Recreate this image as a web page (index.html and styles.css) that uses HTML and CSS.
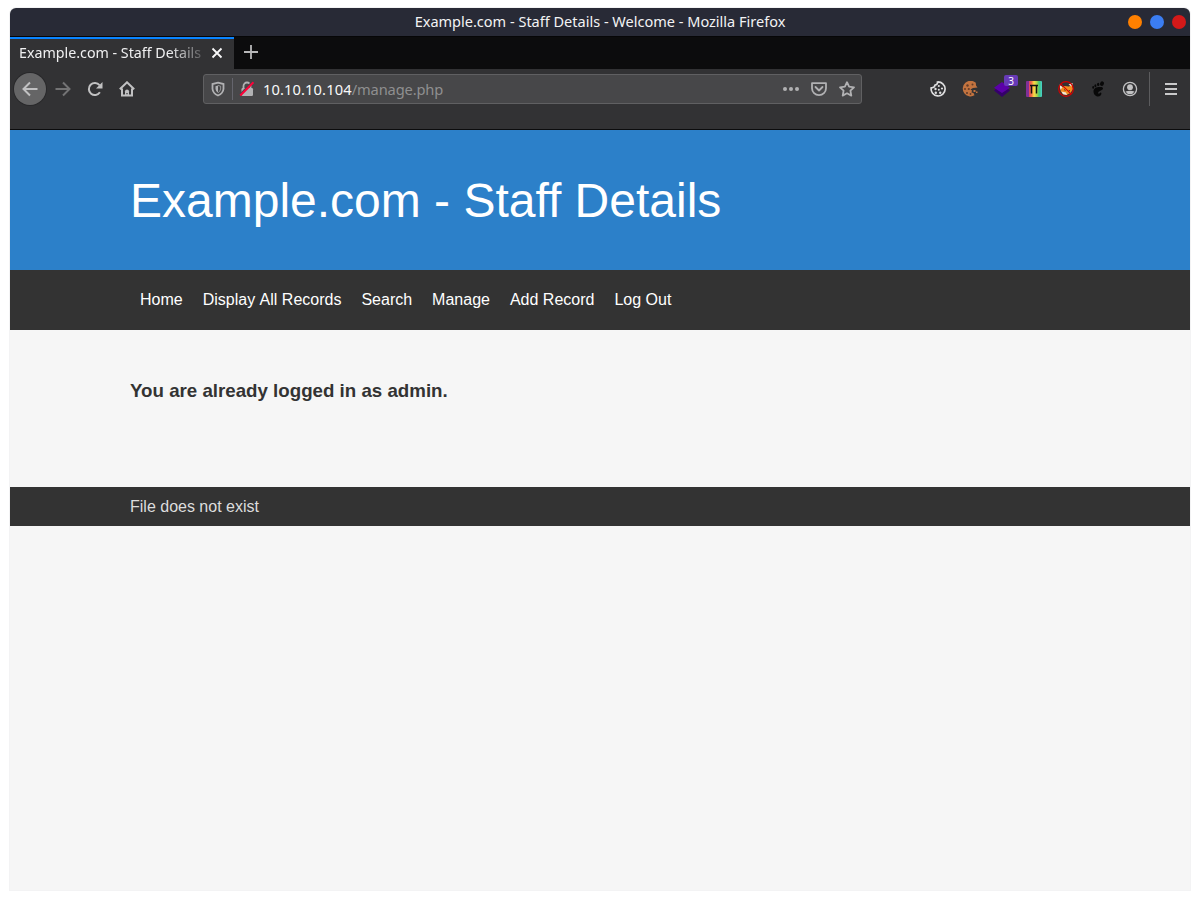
FILE: index.html
```html
<!DOCTYPE html>
<html lang="en">
<head>
<meta charset="utf-8">
<title>Example.com - Staff Details - Welcome</title>
<link rel="stylesheet" href="styles.css">
</head>
<body>
<div class="window">
  <div class="titlebar">
    <span class="titlebar-text">Example.com - Staff Details - Welcome - Mozilla Firefox</span>
    <div class="controls"><i class="dot orange"></i><i class="dot blue"></i><i class="dot red"></i></div>
  </div>
  <div class="tabs">
    <div class="tab">
      <span class="tab-label">Example.com - Staff Details</span>
      <svg class="tab-close" width="12" height="12" viewBox="0 0 12 12"><path d="M1.500 1.500l9 9M10.500 1.500l-9 9" stroke="#f9f9fa" stroke-width="1.800"/></svg>
    </div>
    <svg class="tab-new" width="16" height="16" viewBox="0 0 16 16"><path d="M8 1v14M1 8h14" stroke="#b8b8b9" stroke-width="1.800"/></svg>
  </div>
  <div class="toolbar">
    <div class="btn back"><svg width="16" height="16" viewBox="0 0 16 16"><path d="M15.500 8H1.500M8 1.500L1.500 8 8 14.500" class="line"/></svg></div>
    <div class="btn forward"><svg width="16" height="16" viewBox="0 0 16 16"><path d="M0.500 8h14M8 1.500L14.500 8 8 14.500" class="line"/></svg></div>
    <div class="btn"><svg width="16" height="16" viewBox="0 0 16 16"><path d="M12.900 11.300A6 6 0 1 1 12.500 4.200" class="line"/><path d="M15.500 1v6.500H9z" fill="#c1c1c2"/></svg></div>
    <div class="btn"><svg width="16" height="16" viewBox="0 0 16 16"><path d="M0.800 8.300L8 1.300l7.200 7M3 7.500V14.500H13V7.500" class="line"/><path d="M6 15V10.200Q6 8.500 8 8.500T10 10.200V15z" fill="#c1c1c2"/><path d="M8 12v1.200" stroke="#323234" stroke-width="1.200"/></svg></div>
    <div class="urlbar">
      <svg class="shield" width="14" height="16" viewBox="0 0 14 16"><path d="M7 1.700L12.500 3V8Q12 12.500 7 14.500 2 12.500 1.500 8V3z" class="line"/><path d="M7 4.600L4.500 5.200V8Q4.800 10.500 7 11.800z" fill="#b1b1b3"/><path d="M7 4.500L9.600 5.200V8Q9.300 10.500 7 11.800" stroke="#b1b1b3" fill="none" stroke-width=".7"/></svg>
      <span class="url-divider"></span>
      <svg class="lock" width="16" height="16" viewBox="0 0 16 16"><path d="M4.500 8V5a3.500 3.500 0 0 1 7 0V8" class="line"/><rect x="2.500" y="7" width="11.500" height="8" rx="1.200" fill="#b1b1b3"/><path d="M2 13L13.500 1" stroke="#464648" stroke-width="2.500"/><path d="M1.300 14.500L14.500 1.200" stroke="#ff0039" stroke-width="2"/></svg>
      <span class="address"><span class="host">10.10.10.104</span><span class="path">/manage.php</span></span>
      <div class="url-actions">
        <svg width="16" height="16" viewBox="0 0 16 16"><g fill="#b1b1b3"><circle cx="2" cy="8" r="2"/><circle cx="8" cy="8" r="2"/><circle cx="14" cy="8" r="2"/></g></svg>
        <svg width="16" height="16" viewBox="0 0 16 16"><path d="M1 2.200H15V7.200a7 7 0 0 1-14 0zM4.500 6L8 9.500 11.500 6" class="line" stroke-linejoin="round" stroke-linecap="round"/></svg>
        <svg width="16" height="16" viewBox="0 0 16 16"><path d="M8 1.200l2.100 4.400 4.900.7-3.600 3.400.9 4.900L8 12.300l-4.300 2.300.9-4.900L1 6.300l4.900-.7z" class="line" stroke-linejoin="round"/></svg>
      </div>
    </div>
    <div class="extensions">
      <div class="btn"><svg width="16" height="16" viewBox="0 0 16 16"><path d="M7.500 1Q7.800 3.800 5 4.200 4.500 7 1.200 6.800A7 7 0 1 0 7.500 1z" stroke="#dededf" stroke-width="1.700" fill="none"/><g fill="#dededf"><circle cx="8.800" cy="5" r="1.100"/><circle cx="12" cy="7.500" r="1.100"/><circle cx="5.500" cy="8" r="1.200"/><circle cx="8.800" cy="8.800" r="1"/><circle cx="5.800" cy="11.800" r="1.200"/><circle cx="10.200" cy="11.800" r="1.200"/></g></svg></div>
      <div class="btn"><svg width="16" height="16" viewBox="0 0 16 16"><path d="M13.800 1.800A7.800 7.800 0 1 0 12.500 14.300L11.500 12 9.500 11.500 10 9.500 8.500 8.500 11 7 15.500 6.500 14 4.500z" fill="#c2733f"/><g fill="#633c29"><circle cx="5.500" cy="4.500" r="1.200"/><circle cx="10.500" cy="3.500" r="1"/><circle cx="3" cy="8" r="1"/><circle cx="6.800" cy="8" r="1.100"/><circle cx="5" cy="12" r="1.100"/><circle cx="8.500" cy="13" r=".9"/></g><path d="M11.500 9h2v2h-2zM14 10.500h1.500V12H14z" fill="#c2733f"/></svg></div>
      <div class="btn badge-host"><svg width="16" height="16" viewBox="0 0 16 16"><path d="M0 9.500L8 4l8 5.500L8 16z" fill="#35006b"/><path d="M0 6.700L8 1l8 5.700L8 12z" fill="#5b00a8"/></svg><span class="badge">3</span></div>
      <div class="btn"><svg width="16" height="16" viewBox="0 0 16 16"><defs><linearGradient id="rainbow"><stop stop-color="#803097"/><stop offset=".16" stop-color="#803097"/><stop offset=".2" stop-color="#e34460"/><stop offset=".35" stop-color="#f27745"/><stop offset=".5" stop-color="#fcda45"/><stop offset=".68" stop-color="#afd34b"/><stop offset=".82" stop-color="#42c776"/><stop offset="1" stop-color="#48cfd0"/></linearGradient></defs><rect width="16" height="16" rx="1" fill="url(#rainbow)"/><path d="M4 4.500H12M5.500 12.500V4.500M10.500 4.500V12.500" stroke="#111" stroke-width="1.500" fill="none"/></svg></div>
      <div class="btn"><svg width="16" height="16" viewBox="0 0 16 16"><path d="M3 6.500L6.500 5 11 5.500 14.500 3.500 15 8 12.500 12 8.500 14 5 13 2.500 10z" fill="#f28b20"/><path d="M1.200 3.500L4.500 6 2.500 9zM10.500 3.500L14.800 2 13.500 5.500zM3.500 10.500L8 11.500 9 14 5 13.200z" fill="#f5ead9"/><path d="M6 8.500l1.500 1M10.500 10l1.500-.5" stroke="#54301c"/><circle cx="8" cy="8" r="7.300" stroke="#d40000" stroke-width="1.200" fill="none"/><path d="M2.800 2.800l10.400 10.400" stroke="#d40000" stroke-width="1.100"/></svg></div>
      <div class="btn"><svg width="16" height="16" viewBox="0 0 16 16"><g fill="#080808"><ellipse cx="12" cy="2.600" rx="1.900" ry="2.300" transform="rotate(20 12 2.600)"/><ellipse cx="8.200" cy="3.400" rx="1.200" ry="1.700"/><ellipse cx="5.400" cy="4.700" rx="1" ry="1.500"/><ellipse cx="3.200" cy="6.400" rx=".9" ry="1.300"/><path d="M11.500 6C7 5.500 3.500 7 3.500 10.200 3.500 13 5.500 15.500 8 15.500c2.200 0 3.500-1.400 3.400-3.300-.1-.9-1.200-1-1.600-.2-.4 1-1.500 1-1.700.1C7.800 10 13 9.500 13 7.500 13 6.600 12.300 6.100 11.500 6z"/></g></svg></div>
      <div class="btn"><svg width="16" height="16" viewBox="0 0 16 16"><circle cx="8" cy="8" r="6.600" stroke="#c1c1c2" stroke-width="1.300" fill="none"/><circle cx="8" cy="6.200" r="2.900" fill="#c1c1c2"/><path d="M3.500 10.600Q8 8.900 12.500 10.600 11 13.300 8 13.300T3.500 10.600z" fill="#c1c1c2"/></svg></div>
    </div>
    <div class="menu"><svg width="12" height="12" viewBox="0 0 12 12"><path d="M0 1h12M0 6h12M0 11h12" stroke="#c9c9ca" stroke-width="2"/></svg></div>
  </div>
  <div class="page">
    <header class="banner"><h1>Example.com - Staff Details</h1></header>
    <nav class="nav"><a>Home</a><a>Display All Records</a><a>Search</a><a>Manage</a><a>Add Record</a><a>Log Out</a></nav>
    <main class="content"><h3>You are already logged in as admin.</h3></main>
    <footer class="footer">File does not exist</footer>
  </div>
</div>
</body>
</html>
```
FILE: styles.css
```css
* { box-sizing: border-box; }
body { margin: 0; height: 900px; padding: 8px 10px 10px; background: #fff; overflow: hidden; }
svg { display: block; flex: none; }
.window { height: 882px; display: flex; flex-direction: column; border-radius: 6px 6px 0 0; background: #f6f6f6; box-shadow: 0 0 0 1px #f3f3f4; overflow: hidden; font-family: "Noto Sans", sans-serif; }
.titlebar { height: 28px; flex: none; display: grid; grid-template-columns: 1fr auto 1fr; align-items: center; background: #282a36; color: #f3f3f4; font-size: 14.52px; white-space: nowrap; }
.titlebar-text { grid-column: 2; line-height: 26px; padding-bottom: 2px; }
.controls { display: flex; gap: 8px; justify-content: flex-end; padding-right: 4px; }
.dot { width: 14px; height: 14px; border-radius: 50%; }
.orange { background: #ff8000; }
.blue { background: #3b7df2; }
.red { background: #d41919; }
.tabs { height: 33px; flex: none; display: flex; background: #0c0c0d; border-top: 1px solid #060607; }
.tab { width: 224px; display: flex; align-items: center; background: #323234; border-top: 2px solid #0a84ff; padding-left: 9px; }
.tab-label { width: 187px; margin-top: -3px; white-space: nowrap; color: #f0f0f1; font-size: 14.25px; line-height: 26px; -webkit-mask-image: linear-gradient(to right, #000 150px, transparent 192px); mask-image: linear-gradient(to right, #000 150px, transparent 192px); }
.tab-close { margin: 0 0 3px 5px; }
.tab-new { margin: 7px 0 0 9px; }
.toolbar { height: 61px; flex: none; display: flex; align-items: flex-start; background: #323234; border-bottom: 1px solid #0c0c0d; padding: 4px 0 0 4px; }
.btn { width: 32px; height: 32px; flex: none; display: flex; align-items: center; justify-content: center; }
.line { fill: none; stroke: #c1c1c2; stroke-width: 2; }
.back { background: #656566; border-radius: 50%; box-shadow: 0 0 0 1px #29292b; margin-right: 1px; }
.forward .line { stroke: #737374; }
.urlbar { width: 659px; height: 30px; margin: 1px 0 0 60px; display: flex; align-items: center; background: #474749; border: 1px solid #606062; border-radius: 3px; padding: 0 6px 0 7px; }
.urlbar .line { stroke: #b1b1b3; stroke-width: 1.8; }
.url-divider { width: 1px; height: 22px; background: #65656d; margin-left: 7px; }
.lock { margin-left: 6px; }
.address { margin-left: 8px; color: #f9f9fa; font-size: 14.67px; line-height: 28px; white-space: nowrap; }
.host { letter-spacing: 0.12px; }
.path { color: #8f8f90; letter-spacing: -0.14px; }
.url-actions { display: flex; gap: 12px; margin-left: auto; }
.extensions { display: flex; margin-left: auto; }
.badge-host { position: relative; }
.badge { position: absolute; left: 18px; top: 2px; width: 14px; height: 11px; border-radius: 2px; background: #673ab7; color: #fff; font-size: 10px; line-height: 12px; text-align: center; }
.menu { width: 41px; height: 34px; margin-left: 3px; margin-top: -1px; padding-left: 15px; display: flex; align-items: center; border-left: 1px solid #5c5c5e; }
.page { flex: 1; font-family: "Liberation Sans", Arial, sans-serif; background: #f6f6f6; }
.banner { height: 140px; padding: 41px 0 0 120px; background: #2c80c9; }
.banner h1 { margin: 0; color: #fff; font-size: 48px; font-weight: 400; line-height: 60px; }
.nav { height: 60px; display: flex; align-items: center; gap: 20px; padding-left: 130px; background: #333; color: #fff; font-size: 16px; font-kerning: none; }
.content { height: 157px; padding: 50px 0 0 120px; color: #333; }
.content h3 { margin: 0; font-size: 18.72px; line-height: 22px; }
.footer { height: 39px; padding-left: 120px; background: #333; color: #ddd; font-size: 16px; line-height: 39px; }
```
